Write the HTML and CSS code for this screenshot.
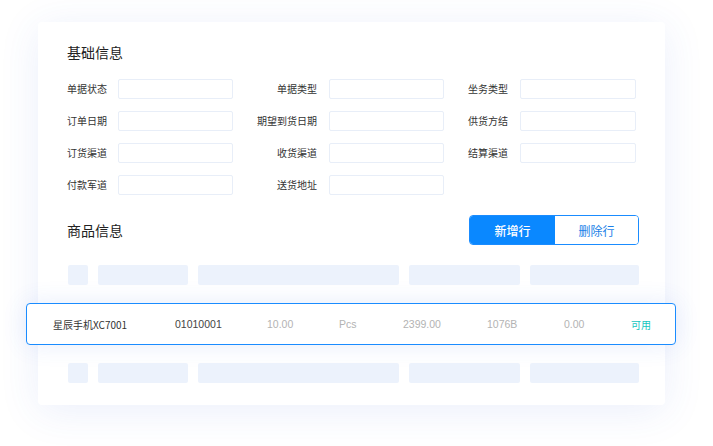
FILE: index.html
```html
<!DOCTYPE html>
<html lang="zh-CN">
<head>
  <meta charset="UTF-8">
  <meta name="viewport" content="width=device-width, initial-scale=1">
  <title>订单信息</title>
  <link rel="stylesheet" href="styles.css">
</head>
<body>
  <div class="card">
    <h2>基础信息</h2>
    <div class="form">
      <label>单据状态</label><div class="field"></div>
      <label>单据类型</label><div class="field"></div>
      <label>坐务类型</label><div class="field"></div>

      <label>订单日期</label><div class="field"></div>
      <label>期望到货日期</label><div class="field"></div>
      <label>供货方结</label><div class="field"></div>

      <label>订货渠道</label><div class="field"></div>
      <label>收货渠道</label><div class="field"></div>
      <label>结算渠道</label><div class="field"></div>

      <label>付款军道</label><div class="field"></div>
      <label>送货地址</label><div class="field"></div>
    </div>

    <div class="head">
      <h2>商品信息</h2>
      <div class="btns">
        <button class="primary">新增行</button>
        <button>删除行</button>
      </div>
    </div>

    <div class="skeleton">
      <span class="s1"></span><span class="s2"></span><span class="s3"></span><span class="s4"></span><span class="s5"></span>
    </div>

    <div class="row">
      <span class="c1">星辰手机XC7001</span>
      <span class="c2">01010001</span>
      <span class="c3 muted">10.00</span>
      <span class="c4 muted">Pcs</span>
      <span class="c5 muted">2399.00</span>
      <span class="c6 muted">1076B</span>
      <span class="c7 muted">0.00</span>
      <span class="ok">可用</span>
    </div>

    <div class="skeleton">
      <span class="s1"></span><span class="s2"></span><span class="s3"></span><span class="s4"></span><span class="s5"></span>
    </div>
  </div>
</body>
</html>
```

FILE: styles.css
```css
body { margin: 0; background: #fff; font-family: "Liberation Sans", "Noto Sans CJK SC", sans-serif; color: #333; width: 713px; height: 446px; overflow: hidden; }
.card { margin: 22px 0 0 38px; width: 627px; height: 383px; box-sizing: border-box; padding: 19px 26px 0 29px; background: #fff; border-radius: 4px; box-shadow: 0 6px 40px rgba(60, 100, 220, 0.10); }
h2 { margin: 0; font-size: 14px; font-weight: normal; line-height: 22px; color: #222; font-family: "Noto Sans CJK SC", sans-serif; }
.form { display: grid; grid-template-columns: 51px 115px 96px 115px 76px 116px; row-gap: 12px; margin-top: 16px; }
.form label { font-size: 10px; line-height: 20px; text-align: right; padding-right: 12px; white-space: nowrap; font-family: "Noto Sans CJK SC", sans-serif; color: #333; }
.form label:nth-child(6n+1) { text-align: left; padding-right: 0; }
.field { height: 20px; box-sizing: border-box; border: 1px solid #e8eef8; border-radius: 2px; }
.head { display: flex; justify-content: space-between; align-items: center; margin-top: 20px; }
.btns { display: flex; border: 1px solid #1a8cff; border-radius: 4px; overflow: hidden; height: 30px; box-sizing: border-box; }
.btns button { border: 0; background: #fff; color: #1a7fe8; font-size: 12px; font-family: "Noto Sans CJK SC", sans-serif; width: 83px; padding: 0; cursor: pointer; }
.btns .primary { background: #0a88ff; color: #fff; width: 85px; font-weight: 500; }
.skeleton { display: flex; gap: 10px; margin-top: 20px; margin-left: 1px; }
.skeleton span { height: 20px; background: #ecf2fc; border-radius: 2px; }
.s1 { width: 20px; }
.s2 { width: 90px; }
.s3 { width: 201px; }
.s4 { width: 111px; }
.s5 { width: 109px; }
.row { display: flex; align-items: center; height: 42px; box-sizing: border-box; margin: 18px -37px 0 -41px; padding-left: 26px; background: #fff; border: 1px solid #1a8cff; border-radius: 4px; box-shadow: 0 0 24px rgba(60, 110, 230, 0.12); font-size: 10.5px; }
.row + .skeleton { margin-top: 18px; }
.row span { white-space: nowrap; }
.c1 { width: 122px; color: #333; font-family: "Noto Sans CJK SC", sans-serif; font-size: 10px; }
.c2 { width: 92px; color: #444; }
.c3 { width: 72px; }
.c4 { width: 64px; }
.c5 { width: 84px; }
.c6 { width: 77px; }
.c7 { width: 67px; }
.muted { color: #b3b3b3; }
.ok { color: #14c6c0; font-family: "Noto Sans CJK SC", sans-serif; font-size: 10px; }
```
